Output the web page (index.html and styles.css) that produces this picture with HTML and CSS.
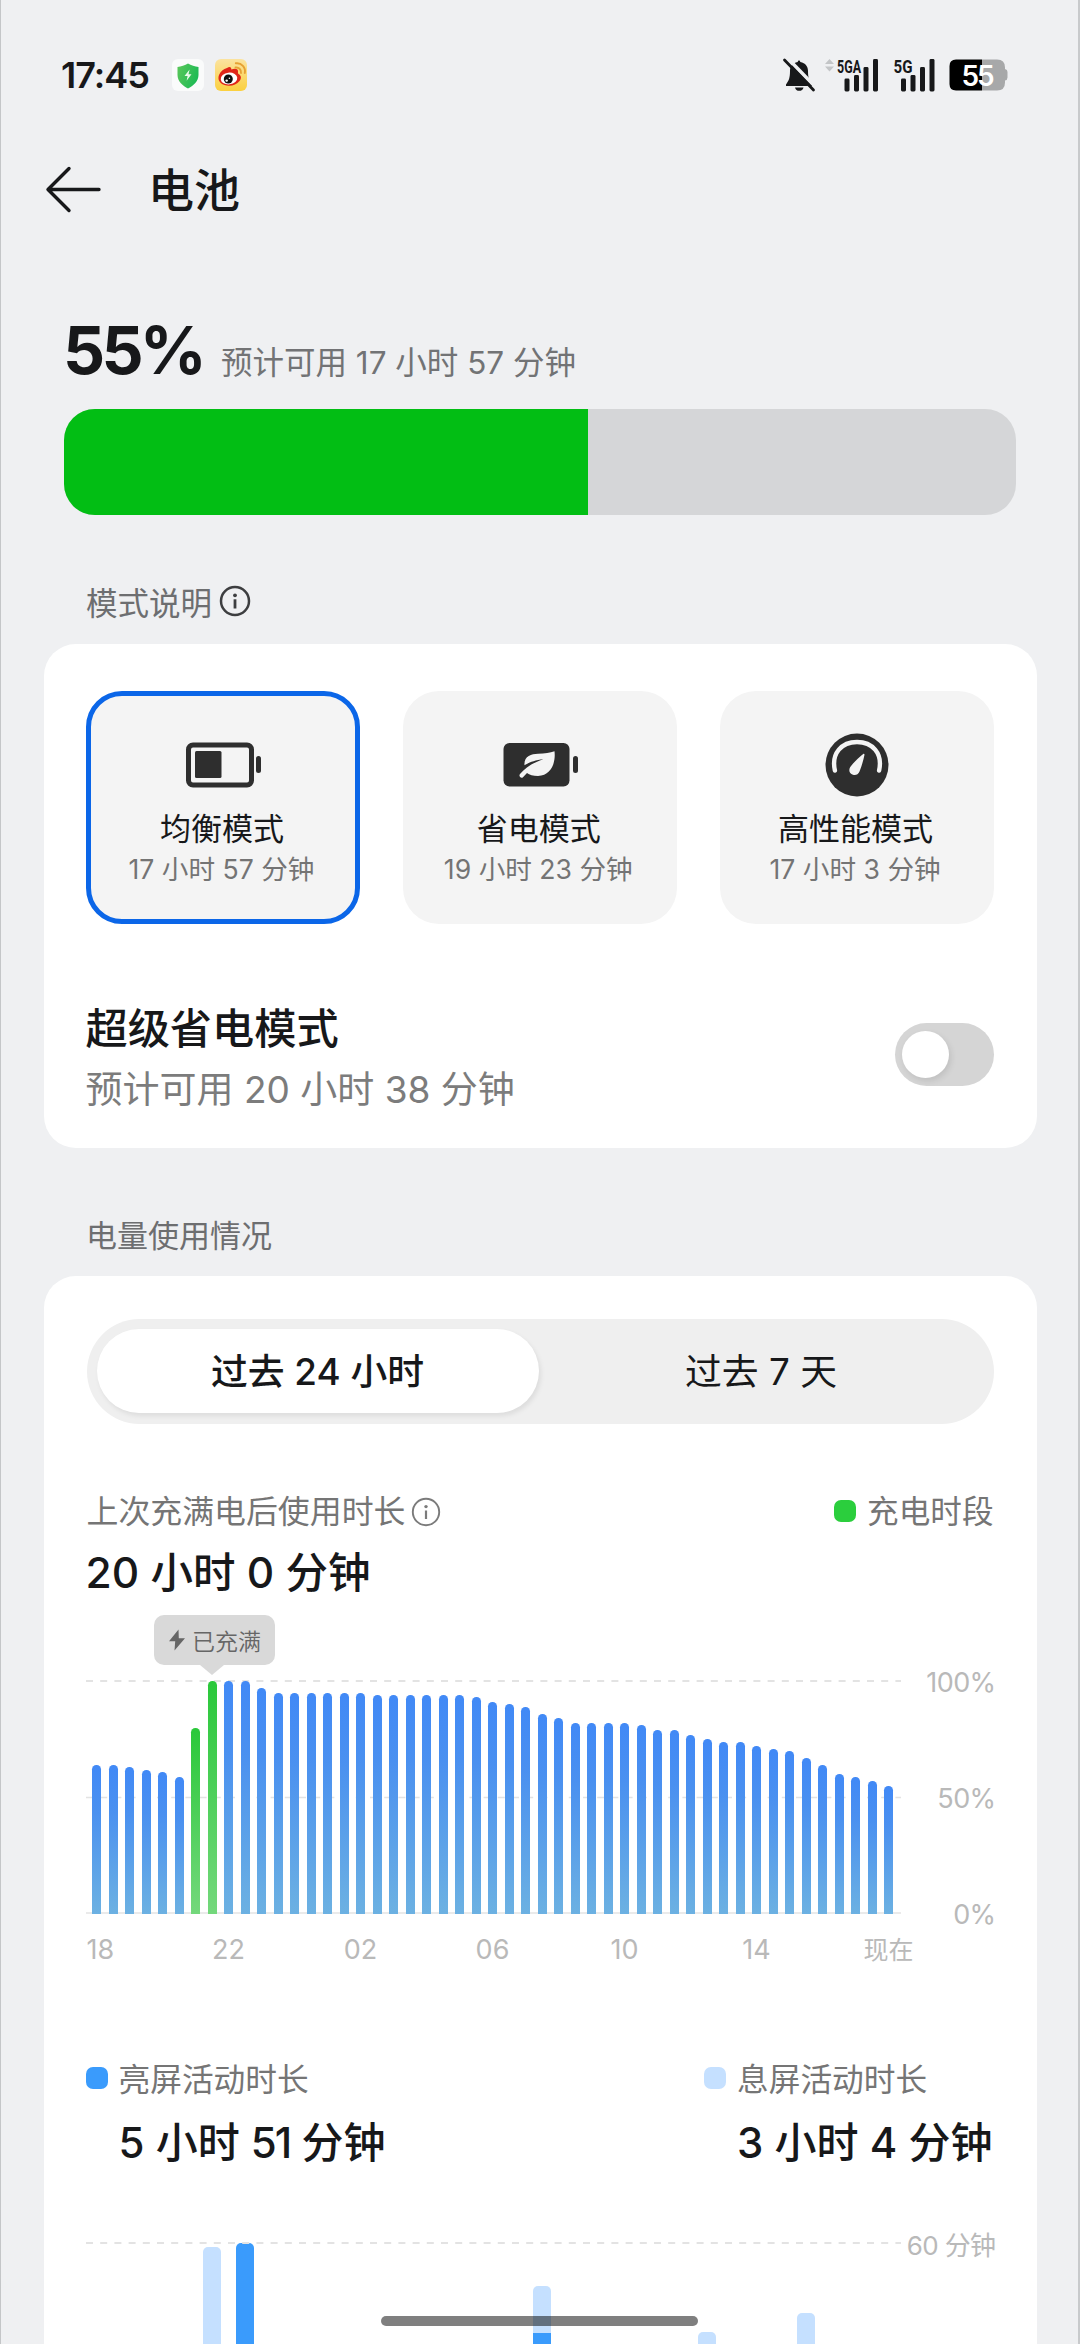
FILE: index.html
```html
<!DOCTYPE html>
<html lang="zh-CN">
<head>
<meta charset="utf-8">
<title>电池</title>
<link rel="stylesheet" href="styles.css">
</head>
<body>
<div class="screen">
  <div class="status">
    <div class="status-left">
      <span class="clock">17:45</span>
      <svg class="app-icon" width="32" height="32" viewBox="0 0 32 32">
        <defs><linearGradient id="shield" x1="0" y1="0" x2="1" y2="0.4"><stop offset="0" stop-color="#5cc75a"/><stop offset="1" stop-color="#1fbb55"/></linearGradient></defs>
        <rect width="32" height="32" rx="6" fill="#fafbfb"/>
        <path d="M16 4.500C19 6.500 23 7.500 26.500 8V16C26.500 22.500 21 27 16 29.500C11 27 5.500 22.500 5.500 16V8C9 7.500 13 6.500 16 4.500Z" fill="url(#shield)"/>
        <path d="M17.600 10.500L12.500 17H15.600L14.600 21.700L19.500 15.200H16.500Z" fill="#eafaea"/>
      </svg>
      <svg class="app-icon" width="32" height="32" viewBox="0 0 32 32">
        <defs><linearGradient id="sun" x1="0" y1="0" x2="0" y2="1"><stop offset="0" stop-color="#fbe3a0"/><stop offset="1" stop-color="#fbd03f"/></linearGradient></defs>
        <rect width="32" height="32" rx="6" fill="url(#sun)"/>
        <path d="M12 9C14.500 7 16.500 7.800 16.300 10.500C19.500 9 23 9.500 23 12C23.200 13.500 22.500 14 23.500 15C26 16.500 27 19 24.500 22C21.500 26 15 27.800 9.500 26C4 24.200 2.500 20 4 16C5.500 12.500 8.500 10 12 9Z" fill="#e02518"/>
        <ellipse cx="14" cy="19.500" rx="8.300" ry="5.900" fill="#fff" transform="rotate(-7 14 19.500)"/>
        <circle cx="13.300" cy="20" r="4.500" fill="#111"/>
        <circle cx="11.700" cy="21.600" r="1.200" fill="#fff"/><circle cx="14.400" cy="19.300" r=".8" fill="#fff"/>
        <path d="M20.500 8.500C23.500 8 26.500 10.500 26 14M20.800 4.300C26.500 3.500 31 8.500 29.800 14" fill="none" stroke="#e6a133" stroke-width="1.900" stroke-linecap="round"/>
      </svg>
    </div>
    <div class="status-right">
      <svg width="34" height="36" viewBox="0 0 34 36">
        <path d="M17 3.500C17.800 3.500 18.200 4.200 18.300 5C23.500 6 26 9.500 26 14C26 20.500 27 23.500 30 27.500V29H4V27.500C7 23.500 8 20.500 8 14C8 9.500 10.500 6 15.700 5C15.800 4.200 16.200 3.500 17 3.500Z" fill="#17181a"/>
        <path d="M13 30.500H21.500C21 33 19.500 33.800 17.200 33.800C15 33.800 13.500 33 13 30.500Z" fill="#17181a"/>
        <path d="M3.500 -1L34.500 31" stroke="#eff0f2" stroke-width="3.400"/>
        <path d="M2.500 3L31.500 33" stroke="#17181a" stroke-width="2.800" stroke-linecap="round"/>
      </svg>
      <svg class="sig-a" width="56" height="36" viewBox="0 0 56 36">
        <path d="M5.500 2L10 7H1ZM5.500 14.500L1 9.500H10Z" fill="#c3c5c7"/>
        <g fill="#17181a"><rect x="20.500" y="21.500" width="5" height="13" rx="1.400"/><rect x="30" y="18" width="5" height="16.500" rx="1.400"/><rect x="39.500" y="10" width="5" height="24.500" rx="1.400"/><rect x="49" y="2" width="5" height="32.500" rx="1.400"/></g>
        <text class="net" x="13" y="15.500" textLength="24" lengthAdjust="spacingAndGlyphs">5GA</text>
      </svg>
      <svg class="sig-b" width="44" height="36" viewBox="0 0 44 36">
        <g fill="#17181a"><rect x="8" y="21.500" width="5" height="13" rx="1.400"/><rect x="17.500" y="18" width="5" height="16.500" rx="1.400"/><rect x="27" y="10" width="5" height="24.500" rx="1.400"/><rect x="36.500" y="2" width="5" height="32.500" rx="1.400"/></g>
        <text class="net" x="0.500" y="15.500" textLength="19" lengthAdjust="spacingAndGlyphs">5G</text>
      </svg>
      <svg width="60" height="32" viewBox="0 0 60 32">
        <path d="M33 0.500H48Q56 0.500 56 8.500V10Q58.500 10.500 58.500 13V18.500Q58.500 21 56 21.500V23.500Q56 31.500 48 31.500H33Z" fill="#a7a8a9"/>
        <path d="M7 0.500H33V31.500H7Q0.500 31.500 0.500 25V7Q0.500 0.500 7 0.500Z" fill="#000"/>
        <text class="pct" x="29" y="26.500" text-anchor="middle" textLength="33">55</text>
      </svg>
    </div>
  </div>

  <div class="header">
    <svg width="56" height="46" viewBox="0 0 56 46" fill="none" stroke="#17181a" stroke-width="3.400" stroke-linecap="round" stroke-linejoin="round"><path d="M24 1.500L3 22.500L24 43.500M3 22.500H54"/></svg>
    <h1>电池</h1>
  </div>

  <div class="summary">
    <span class="percent">55%</span><span class="estimate">预计可用 17 小时 57 分钟</span>
  </div>
  <div class="level"><div class="level-fill" style="width:55%"></div></div>

  <div class="section-label">模式说明
    <svg width="32" height="32" viewBox="0 0 32 32"><circle cx="16" cy="16" r="14" fill="none" stroke="#3d3e40" stroke-width="2.500"/><circle cx="16" cy="10.300" r="1.900" fill="#3d3e40"/><path d="M16 14.300V23.500" stroke="#3d3e40" stroke-width="2.800"/></svg>
  </div>

  <div class="card modes-card">
    <div class="modes">
      <div class="mode selected">
        <svg width="78" height="64" viewBox="0 0 78 64">
          <rect x="4.500" y="12" width="63" height="40" rx="4.500" fill="none" stroke="#2e2e2e" stroke-width="5"/>
          <rect x="11" y="18" width="26.500" height="27" rx="1.500" fill="#2e2e2e"/><rect x="72" y="23" width="5" height="17" rx="2.500" fill="#2e2e2e"/>
        </svg>
        <div class="mode-name">均衡模式</div><div class="mode-time">17 小时 57 分钟</div>
      </div>
      <div class="mode">
        <svg width="78" height="64" viewBox="0 0 78 64">
          <rect x="2.500" y="10" width="66" height="43.500" rx="6" fill="#2e2e2e"/><rect x="72" y="23" width="5" height="17" rx="2.500" fill="#2e2e2e"/>
          <path d="M53.500 18.200C54.800 28.500 51 42.500 37 43C32 43 28.500 42 26 40L22 44.200C20 45.800 17.300 43.200 19 41C24 35 32 29.500 42.500 26.200C33 27 27 30 23.500 32.300C22.800 23.500 30 21 37 20.800C44 20.500 49 20 53.500 18.200Z" fill="#f4f4f4"/>
        </svg>
        <div class="mode-name">省电模式</div><div class="mode-time">19 小时 23 分钟</div>
      </div>
      <div class="mode">
        <svg width="64" height="64" viewBox="0 0 64 64">
          <circle cx="32" cy="32" r="31.500" fill="#2e2e2e"/><path d="M9.900 37.500C6 20 17 9 32 9S58 20 54.100 37.500" fill="none" stroke="#f4f4f4" stroke-width="4.400" stroke-linecap="round"/>
          <path d="M38.200 20.900C39 20.600 39.600 21 39.500 21.800C38.500 27 36.500 33.500 34.500 38.500C33.300 41.500 30.500 42.600 28 41.800C24.500 40.700 23.500 37.500 25 34.500C27.500 30.500 33.500 24.500 38.200 20.900Z" fill="#f4f4f4"/>
        </svg>
        <div class="mode-name">高性能模式</div><div class="mode-time">17 小时 3 分钟</div>
      </div>
    </div>
    <div class="super">
      <div><div class="super-title">超级省电模式</div><div class="super-sub">预计可用 20 小时 38 分钟</div></div>
      <div class="toggle"><div class="knob"></div></div>
    </div>
  </div>

  <div class="section-label usage-label">电量使用情况</div>

  <div class="card usage-card">
    <div class="segment"><div class="seg active">过去 24 小时</div><div class="seg">过去 7 天</div></div>

    <div class="row">
      <div class="caption">上次充满电后使用时长
        <svg width="30" height="30" viewBox="0 0 30 30"><circle cx="15" cy="15" r="13.200" fill="none" stroke="#7b7b7b" stroke-width="1.900"/><circle cx="15" cy="9.600" r="1.700" fill="#7b7b7b"/><path d="M15 13.500V22" stroke="#7b7b7b" stroke-width="2.200"/></svg>
      </div>
      <div class="caption legend"><i class="swatch green"></i>充电时段</div>
    </div>
    <div class="value full-value">20 小时 0 分钟</div>

    <div class="chart">
      <div class="plot">
        <svg class="grid" width="815" height="234" viewBox="0 0 815 234" fill="none"><path d="M0 1H815" stroke="#e3e3e3" stroke-width="2" stroke-dasharray="7 7.200"/><path d="M0 117.500H815" stroke="#e3e3e3" stroke-width="1.500" stroke-dasharray="7 7.200"/><path d="M0 233H815" stroke="#e3e3e3" stroke-width="1.500"/></svg>
        <div class="bars">
          <i style="height:64%"></i><i style="height:64%"></i><i style="height:63%"></i><i style="height:62%"></i><i style="height:61%"></i><i style="height:59%"></i><i class="charging" style="height:80%"></i>
          <i class="charging" style="height:100%"><span class="tip"><svg width="18" height="22" viewBox="0 0 18 22"><path d="M10.500 0.500L1 12.200H7.200L6.500 21.500L17 9.300H10.800Z" fill="#666"/></svg>已充满</span></i>
          <i style="height:100%"></i><i style="height:100%"></i><i style="height:97%"></i><i style="height:95%"></i><i style="height:95%"></i><i style="height:95%"></i><i style="height:95%"></i><i style="height:95%"></i><i style="height:95%"></i>
          <i style="height:94%"></i><i style="height:94%"></i><i style="height:94%"></i><i style="height:94%"></i><i style="height:94%"></i><i style="height:94%"></i><i style="height:93%"></i><i style="height:91%"></i>
          <i style="height:90%"></i><i style="height:89%"></i><i style="height:86%"></i><i style="height:84%"></i><i style="height:82%"></i><i style="height:82%"></i><i style="height:82%"></i><i style="height:82%"></i>
          <i style="height:81%"></i><i style="height:79%"></i><i style="height:79%"></i><i style="height:77%"></i><i style="height:75%"></i><i style="height:74%"></i><i style="height:74%"></i><i style="height:72%"></i>
          <i style="height:71%"></i><i style="height:70%"></i><i style="height:67%"></i><i style="height:64%"></i><i style="height:60%"></i><i style="height:59%"></i><i style="height:57%"></i><i style="height:55%"></i>
        </div>
      </div>
      <div class="y-axis"><span>100%</span><span>50%</span><span>0%</span></div>
    </div>
    <div class="x-axis"><span>18</span><span>22</span><span>02</span><span>06</span><span>10</span><span>14</span><span>现在</span></div>

    <div class="row activity">
      <div class="stat"><i class="swatch blue"></i><div><div class="caption">亮屏活动时长</div><div class="value">5 小时 <span class="tight">51</span> 分钟</div></div></div>
      <div class="stat"><i class="swatch pale"></i><div><div class="caption">息屏活动时长</div><div class="value">3 小时 4 分钟</div></div></div>
    </div>

    <div class="chart activity-chart">
      <div class="plot">
        <svg class="grid" width="815" height="4" viewBox="0 0 815 4" fill="none"><path d="M0 1H815" stroke="#e3e3e3" stroke-width="2" stroke-dasharray="7 7.200"/></svg>
        <div class="hours">
          <i></i><i></i><i></i><i style="height:97px"></i><i class="on" style="height:101px"></i><i></i><i></i><i></i><i></i><i></i><i></i><i></i><i></i>
          <i class="stack" style="height:58px"></i><i></i><i></i><i></i><i></i><i style="height:12px"></i><i></i><i></i><i style="height:31px"></i><i></i><i></i>
        </div>
      </div>
      <div class="y-axis"><span>60 分钟</span></div>
    </div>
  </div>
  <div class="home-bar"></div>
</div>
</body>
</html>
```
FILE: styles.css
```css
* { box-sizing: border-box; }
body { margin: 0; }
.screen {
  position: relative;
  width: 1080px;
  height: 2344px;
  overflow: hidden;
  background: #eff0f2;
  box-shadow: inset 1px 0 #c4c6c8, inset -2px 0 #c8cacc;
  color: #17181a;
  font-family: Inter, "Noto Sans CJK SC", sans-serif;
  white-space: nowrap;
}
svg { display: block; flex: none; overflow: visible; }
i { display: block; font-style: normal; }

/* status bar */
.status { display: flex; justify-content: space-between; height: 150px; padding: 0 71px 0 61px; align-items: center; }
.status-left, .status-right { display: flex; align-items: center; }
.clock { width: 111px; font-size: 36px; font-weight: 600; letter-spacing: -1px; line-height: 40px; }
.app-icon + .app-icon { margin-left: 11px; }
.sig-a { margin-left: 8px; }
.sig-b { margin: 0 12px 0 13px; }
.net { font: 700 18.500px "Roboto", sans-serif; fill: #17181a; }
.pct { font: 600 28px Inter, sans-serif; fill: #fff; }

/* title */
.header { display: flex; align-items: center; height: 80px; padding-left: 45px; }
.header h1 { margin: 0 0 0 47px; font-size: 46px; font-weight: 500; line-height: 60px; }

/* battery level */
.summary { display: flex; align-items: baseline; height: 99px; padding: 0 0 0 63px; margin-top: 80px; }
.percent { width: 158px; font-size: 66px; font-weight: 700; line-height: 80px; letter-spacing: -3.800px; }
.estimate { font-size: 31.500px; color: #727375; }
.level { width: 952px; height: 106px; margin-left: 64px; border-radius: 31px; overflow: hidden; background: #d5d6d8; }
.level-fill { height: 100%; background: #02be14; }

.section-label { display: flex; align-items: center; gap: 7px; height: 50px; margin: 61px 0 0 86px; font-size: 31.500px; color: #6d6e70; }
.usage-label { margin-top: 60px; font-size: 31px; }

.card { width: 993px; margin: 18px 0 0 43.500px; padding: 0 43px; border-radius: 32px; background: #fff; }

/* power modes */
.modes-card { height: 504px; padding-top: 47px; }
.modes { display: grid; grid-template-columns: repeat(3, 1fr); gap: 43px; margin-left: -0.500px; }
.mode { display: flex; flex-direction: column; align-items: center; height: 233px; padding-top: 37px; border: 5px solid transparent; border-radius: 36px; background: #f4f4f4; }
.mode.selected { border-color: #0b66e8; }
.mode-name { margin: 14px 2px 0 0; font-size: 31px; line-height: 36px; }
.mode-time { margin: 7px 3px 0 0; font-size: 26.600px; line-height: 30px; color: #747474; }
.mode-name, .mode-time, .super-sub, .caption { font-weight: 370; }
.super { display: flex; justify-content: space-between; margin-top: 77px; }
.super-title { margin-left: -1px; font-size: 42.200px; font-weight: 500; line-height: 56px; }
.super-sub { margin: 8px 0 0 -1px; font-size: 37px; line-height: 50px; color: #7c7c7c; }
.toggle { width: 99px; height: 63px; margin-top: 22px; padding: 8px 7px; border-radius: 32px; background: #d5d5d5; }
.knob { width: 47px; height: 47px; border-radius: 50%; background: #fff; box-shadow: 2px 3px 6px rgba(0,0,0,.1); }

/* usage */
.usage-card { height: 1100px; padding-top: 43px; }
.segment { display: grid; grid-template-columns: 442px 1fr; height: 105px; padding: 10px; border-radius: 53px; background: #efefef; font-size: 36.800px; line-height: 86px; text-align: center; }
.seg.active { height: 84px; border-radius: 42px; background: #fff; box-shadow: 2px 3px 5px rgba(0,0,0,.08); font-weight: 500; }
.row { display: flex; justify-content: space-between; }
.segment + .row { margin-top: 66px; }
.caption { display: flex; align-items: center; gap: 6px; font-size: 31.900px; line-height: 44px; color: #757575; }
.legend { font-size: 31.600px; }
.swatch { width: 22px; height: 22px; border-radius: 7px; }
.caption .swatch { margin: -3px 5px 0 0; }
.green { background: #2bce3d; }
.blue { background: #3a9bfc; }
.pale { background: #c5e0ff; }
.value { font-size: 42px; font-weight: 500; line-height: 56px; }
.full-value { margin: 11px 0 0 -1px; font-size: 42.500px; }
.tight { letter-spacing: -2px; }

.chart { display: flex; justify-content: space-between; margin: 79px -2px 0 -1px; }
.plot { position: relative; width: 815px; height: 234px; }
.grid { position: absolute; left: 0; top: 0; }
.bars { position: relative; display: grid; grid-template-columns: repeat(49, 16.500px); align-items: end; justify-items: center; width: 808.500px; height: 233px; margin: 1px 0 0 3px; }
.bars > i { position: relative; width: 8.600px; border-radius: 4.300px 4.300px 0 0; background: linear-gradient(#4189f6, #4a90f0 30%, #6cb1e2); }
.bars > .charging { background: linear-gradient(#2ac83a, #74d87c); }
.tip { position: absolute; left: -54px; bottom: calc(100% + 16px); display: flex; align-items: center; gap: 6px; width: 121px; height: 50px; padding-left: 14px; border-radius: 10px; background: #d9d9d9; color: #666; font-size: 23px; font-weight: 350; }
.tip::after { content: ""; position: absolute; left: 46px; top: 100%; border: 12px solid transparent; border-top: 10px solid #d9d9d9; border-bottom: 0; }
.y-axis { display: flex; flex-direction: column; justify-content: space-between; margin: -13px 0 -17px; font-size: 27px; line-height: 32px; letter-spacing: -0.600px; text-align: right; color: #b9b9b9; }
.x-axis { display: grid; grid-template-columns: 76px repeat(6, 132px); margin: 20px 0 0; font-size: 27px; line-height: 32px; text-align: center; color: #b9b9b9; }
.x-axis span:first-child { text-align: left; }
.x-axis span:last-child { font-size: 25px; }

.activity { margin: 92px 1px 0 -1px; }
.stat { display: flex; gap: 11px; }
.stat .caption { font-size: 31.700px; }
.stat .swatch { margin-top: 9px; }
.stat .value { margin-top: 13px; }
.activity-chart { margin-top: 71px; }
.activity-chart .plot { height: 110px; }
.hours { display: grid; grid-template-columns: repeat(24, 33px); align-items: end; justify-items: center; height: 102px; margin-left: 10.500px; }
.hours i { width: 18px; border-radius: 5px 5px 0 0; background: #c5e0ff; }
.hours .on { background: #3a9bfc; }
.hours .stack { background: linear-gradient(#c5e0ff 47px, #3a9bfc 47px); }
.activity-chart .y-axis { margin-top: -12px; font-size: 26px; }
.home-bar { position: absolute; left: 381px; top: 2316px; width: 317px; height: 10px; border-radius: 5px; background: rgba(0,0,0,.5); }
```
